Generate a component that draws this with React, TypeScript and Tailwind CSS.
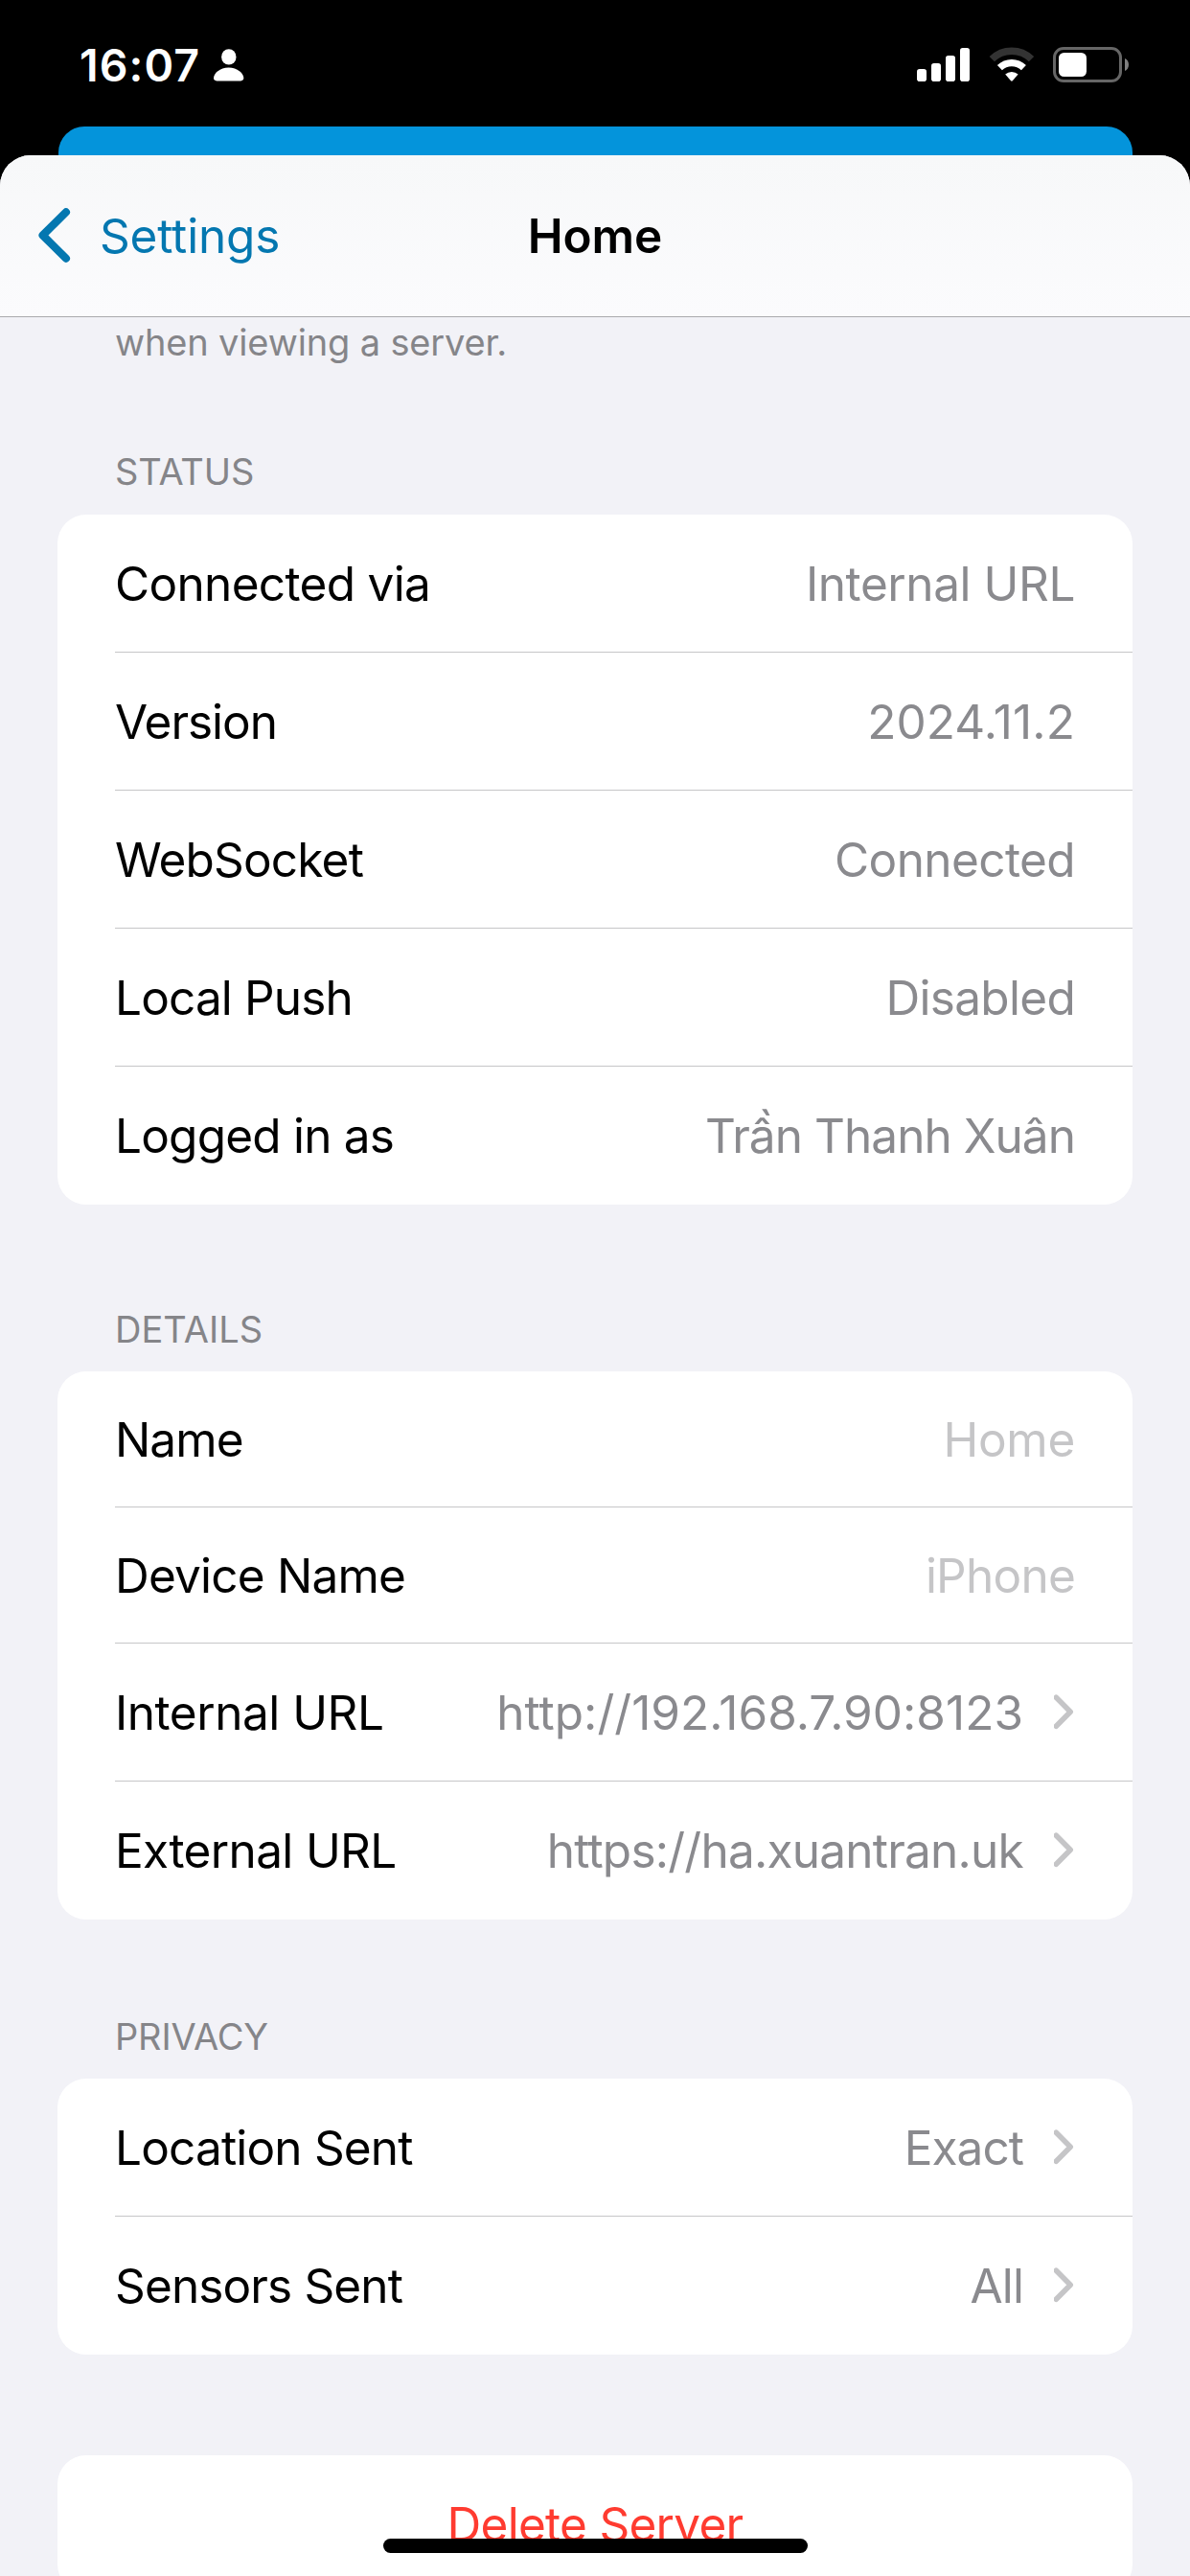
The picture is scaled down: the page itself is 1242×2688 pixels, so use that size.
type Item = {
  label: string;
  labelTracking: string;
  value: string;
  valueTracking: string;
  height?: string;
  placeholder?: boolean;
  link?: boolean;
};

type Section = { title: string; titleTracking: string; spacing: string; items: Item[] };

const sections: Section[] = [
  {
    title: "STATUS",
    titleTracking: "tracking-[-0.1px]",
    spacing: "mt-[85px] gap-[20px]",
    items: [
      { label: "Connected via", labelTracking: "tracking-[-0.67px]", value: "Internal URL", valueTracking: "tracking-[-0.42px]" },
      { label: "Version", labelTracking: "tracking-[-1.04px]", value: "2024.11.2", valueTracking: "tracking-[0.11px]" },
      { label: "WebSocket", labelTracking: "tracking-[-0.8px]", value: "Connected", valueTracking: "tracking-[-0.6px]" },
      { label: "Local Push", labelTracking: "tracking-[-0.85px]", value: "Disabled", valueTracking: "tracking-[-0.7px]" },
      { label: "Logged in as", labelTracking: "tracking-[-0.79px]", value: "Trần Thanh Xuân", valueTracking: "tracking-[-0.95px]" },
    ],
  },
  {
    title: "DETAILS",
    titleTracking: "tracking-[0.04px]",
    spacing: "mt-[105px] gap-[19px]",
    items: [
      { label: "Name", labelTracking: "tracking-[-0.92px]", value: "Home", valueTracking: "tracking-[-0.28px]", height: "h-[142px]", placeholder: true },
      { label: "Device Name", labelTracking: "tracking-[-0.79px]", value: "iPhone", valueTracking: "tracking-[-0.76px]", height: "h-[142px]", placeholder: true },
      { label: "Internal URL", labelTracking: "tracking-[-0.47px]", value: "http://192.168.7.90:8123", valueTracking: "tracking-[0.03px]", link: true },
      { label: "External URL", labelTracking: "tracking-[-0.64px]", value: "https://ha.xuantran.uk", valueTracking: "tracking-[-0.76px]", link: true },
    ],
  },
  {
    title: "PRIVACY",
    titleTracking: "tracking-[-0.15px]",
    spacing: "mt-[97px] gap-[19px]",
    items: [
      { label: "Location Sent", labelTracking: "tracking-[-0.82px]", value: "Exact", valueTracking: "tracking-[-0.96px]", link: true },
      { label: "Sensors Sent", labelTracking: "tracking-[-0.87px]", value: "All", valueTracking: "tracking-[-0.9px]", link: true },
    ],
  },
];

function StatusBar() {
  return (
    <div className="flex h-[132px] items-start justify-between pt-[38px] pr-[64px] pl-[83px] text-white">
      <div className="flex h-[60px] items-center">
        <span className="w-[140px] text-[46.5px] leading-[60px] font-semibold tracking-[1.08px]">16:07</span>
        <svg className="h-[34px] w-[32px]" viewBox="0 0 32 34" fill="currentColor">
          <ellipse cx="15.8" cy="8.4" rx="7.7" ry="8.2" />
          <path d="M15.6 19.6C24.8 19.6 31.3 25.6 31.3 30.6C31.3 32.4 30.1 33.4 28.2 33.4H3.1C1.2 33.4 0 32.4 0 30.6C0 25.6 6.5 19.6 15.6 19.6Z" />
        </svg>
      </div>
      <div className="mt-[11px] flex h-[37px] items-start">
        <svg className="h-[37px] w-[55px]" viewBox="0 0 55 37" fill="currentColor">
          <rect x="0" y="23" width="10" height="13" rx="2.8" />
          <rect x="15" y="17" width="10" height="19" rx="2.8" />
          <rect x="30" y="9" width="10" height="27" rx="2.8" />
          <rect x="45" y="1" width="10" height="35" rx="2.8" />
        </svg>
        <svg className="ml-[19.5px] h-[37px] w-[48px]" viewBox="0 0 48 37" fill="none">
          <path d="M3.3 12.6A29.5 29.5 0 0 1 44.5 12.6" stroke="#333333" strokeWidth="7.6" />
          <path d="M11.4 21.6A18 18 0 0 1 36.4 21.6" stroke="#ffffff" strokeWidth="7.2" />
          <path d="M17.2 28.6A10.2 10.2 0 0 1 30.6 28.6L24.8 35.2Q23.9 36.1 23 35.2Z" fill="#ffffff" />
        </svg>
        <svg className="ml-[19.5px] h-[37px] w-[79px]" viewBox="0 0 79 37">
          <rect x="1.5" y="1.5" width="69" height="34" rx="9.5" fill="none" stroke="#666666" strokeWidth="3" />
          <rect x="6" y="6" width="29" height="25" rx="5.5" fill="#ffffff" />
          <path d="M75 12C77.6 13 79 15.6 79 18.5S77.6 24 75 25Z" fill="#808080" />
        </svg>
      </div>
    </div>
  );
}

function Disclosure() {
  return (
    <svg className="ml-[32px] h-[38px] w-[22px]" viewBox="0 0 22 38" fill="none" stroke="#c5c5c7" strokeWidth="5.6" strokeLinecap="round" strokeLinejoin="round">
      <path d="M2.3 3.2L17.2 18.2L2.3 33.2" />
    </svg>
  );
}

function Row({ item, last }: { item: Item; last: boolean }) {
  return (
    <div className={`ml-[60px] flex items-center pr-[60px] ${item.height ?? "h-[144px]"} ${last ? "" : "border-b border-[#c6c6c8]"}`}>
      <span className={`flex-1 whitespace-nowrap text-black ${item.labelTracking}`}>{item.label}</span>
      <span className={`whitespace-nowrap ${item.valueTracking} ${item.placeholder ? "text-[#c5c5c7]" : "text-[#8a8a8e]"}`}>{item.value}</span>
      {item.link && <Disclosure />}
    </div>
  );
}

export default function App() {
  return (
    <div className="relative flex h-[2688px] w-[1242px] flex-col overflow-hidden bg-black font-[Inter,'Noto_Sans',sans-serif] text-[49.5px] leading-[60px]">
      <StatusBar />
      <div className="mx-[60.5px] h-[30px] shrink-0 rounded-t-[27px] bg-[#0494db]" />
      <div className="flex flex-1 flex-col overflow-hidden rounded-t-[32px] bg-[#f2f2f7]">
        <header className="grid h-[169px] shrink-0 grid-cols-3 items-center border-b border-[#a9a9ad] bg-linear-to-b from-[#f7f8f9] to-[#fbfbfd]">
          <div className="flex items-center pl-[40px] text-[#0477b0]">
            <svg className="h-[58px] w-[34px]" viewBox="0 0 34 58" fill="none" stroke="currentColor" strokeWidth="8.2" strokeLinecap="round" strokeLinejoin="round">
              <path d="M28.9 4.4L4.6 28.5L28.9 52.7" />
            </svg>
            <span className="ml-[30px] tracking-[-0.16px]">Settings</span>
          </div>
          <h1 className="text-center font-semibold tracking-[-0.11px]">Home</h1>
        </header>
        <main className="px-[60px]">
          <p className="px-[60px] pt-[1px] text-[38px] leading-[50px] tracking-[-0.15px] text-[#858589]">when viewing a server.</p>
          {sections.map((section) => (
            <section key={section.title} className={`flex flex-col ${section.spacing}`}>
              <h2 className={`px-[60px] text-[38px] leading-[50px] text-[#858589] ${section.titleTracking}`}>{section.title}</h2>
              <div className="rounded-[30px] bg-white">
                {section.items.map((item, i) => (
                  <Row key={item.label} item={item} last={i === section.items.length - 1} />
                ))}
              </div>
            </section>
          ))}
          <button className="mt-[105px] flex h-[144px] w-full items-center justify-center rounded-[30px] bg-white tracking-[-0.72px] text-[#ff3b30]">
            Delete Server
          </button>
        </main>
      </div>
      <div className="absolute bottom-[24px] left-[399.5px] h-[15px] w-[443px] rounded-full bg-black" />
    </div>
  );
}
